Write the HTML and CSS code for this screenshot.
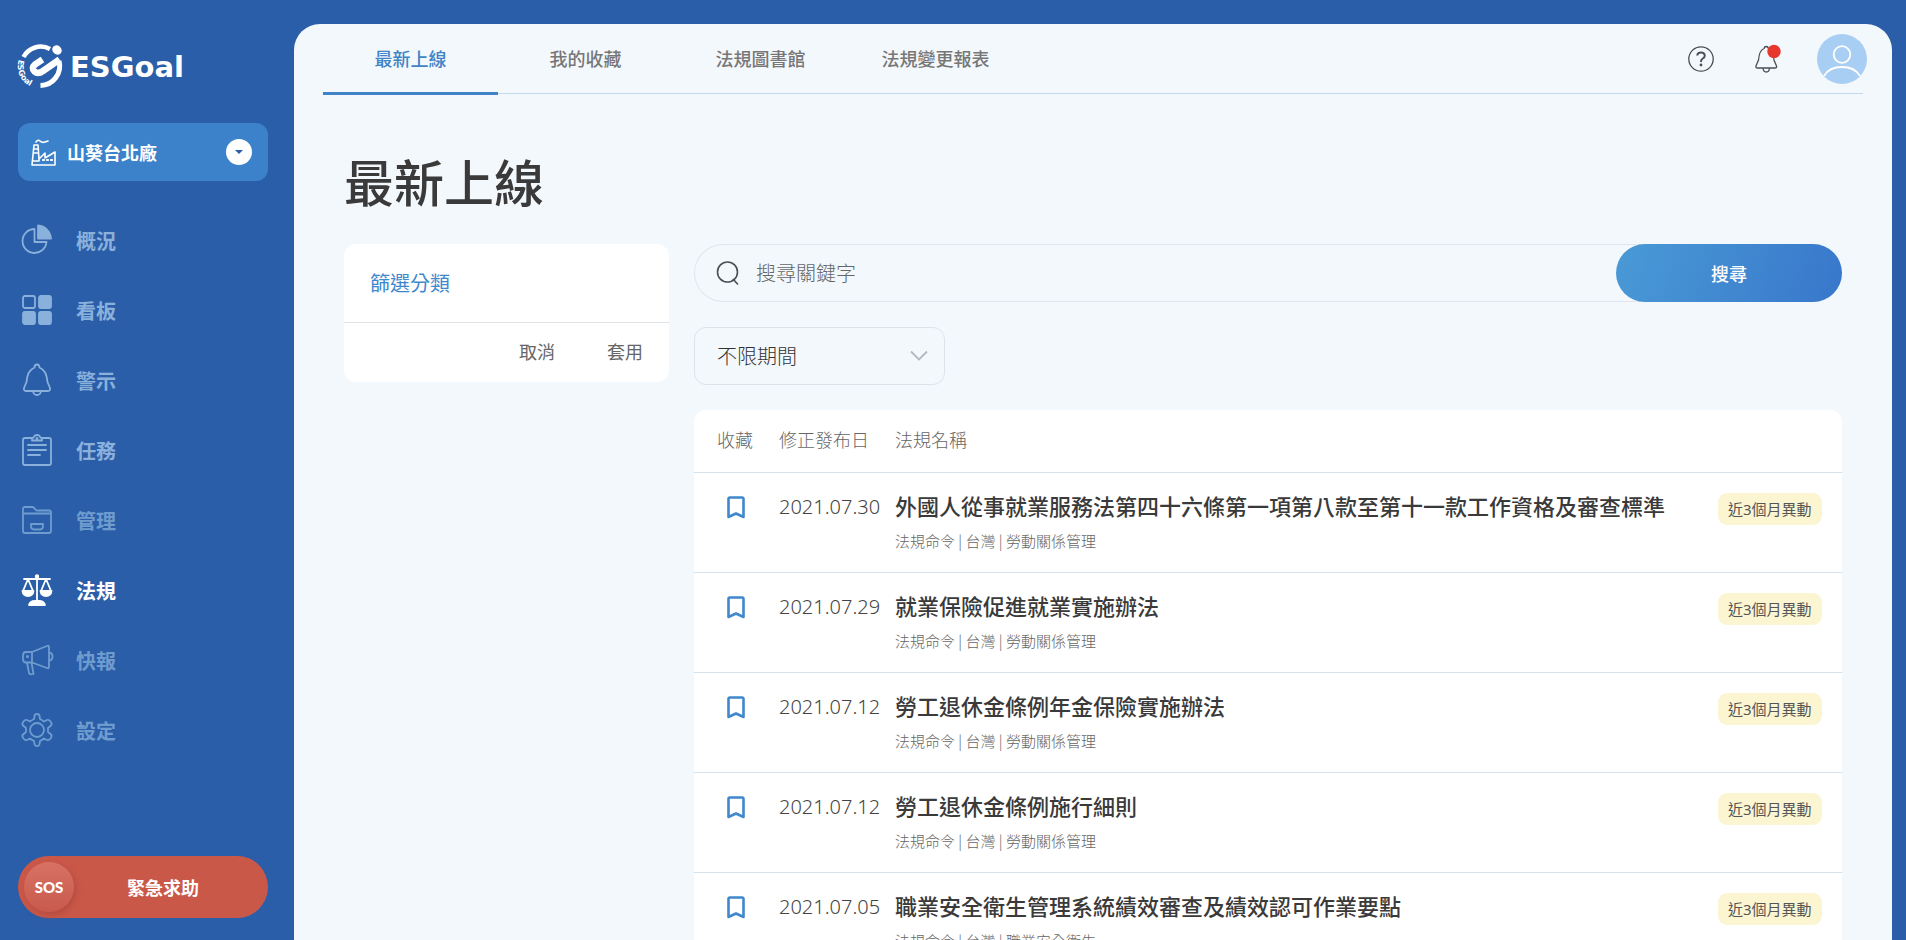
FILE: index.html
```html
<!DOCTYPE html>
<html lang="zh-Hant">
<head>
<meta charset="utf-8">
<meta name="viewport" content="width=device-width, initial-scale=1">
<title>ESGoal 最新上線</title>
<link rel="stylesheet" href="styles.css">
</head>
<body>
<div class="app">
  <aside class="sidebar">
    <a class="logo" href="#" aria-label="ESGoal">
      <svg class="logo-mark" viewBox="0 0 44 46" width="44" height="46" fill="none" stroke="#fff">
        <path d="M5.500 13A19.500 19.500 0 0 1 32 5" stroke-width="4.500"/>
        <ellipse cx="39" cy="6" rx="5" ry="4.400" fill="#fff" stroke="none" transform="rotate(40 39 6)"/>
        <path d="M22.500 41.500A19.500 19.500 0 0 0 41 17" stroke-width="5"/>
        <path d="M24.500 15.500L17 20.500Q13 24 16.500 27.500Q20 30.500 25 27L41.500 15.500" stroke-width="6.500" stroke-linejoin="round"/>
        <path id="ring" d="M1 15.500A22 22 0 0 0 22 44.500" stroke="none"/>
        <text class="ring-text"><textPath href="#ring">ESGoal</textPath></text>
      </svg>
      <span class="logo-name">ESGoal</span>
    </a>
    <button class="site" type="button">
      <svg width="25" height="27" viewBox="0 0 25 27" fill="none" stroke="#fff" stroke-width="1.600" stroke-linejoin="round" stroke-linecap="round">
        <path d="M1 26L3 6H7L8 20L14 14V19L24 13V26H1ZM3 10H7M2.500 14H7.500M2 22H8V20M5 3Q7 0 9 2T14 3T17 2"/>
        <path d="M12 21H13M16 21H17M20 21H21" stroke-width="2.200"/>
      </svg>
      <span class="site-name">山葵台北廠</span>
      <svg width="26" height="26" viewBox="0 0 26 26"><circle cx="13" cy="13" r="13" fill="#fff"/><path d="M9 11H17L13 15Z" fill="#2a5ea8"/></svg>
    </button>
    <nav class="menu">
      <a class="menu-item" href="#">
        <svg viewBox="0 0 32 32"><path d="M13.500 5A12 12 0 1 0 25.500 18H13.500Z"/><path class="solid" d="M17 1.500A14 14 0 0 1 30 14.500H17Z"/></svg>概況</a>
      <a class="menu-item" href="#">
        <svg viewBox="0 0 32 32"><rect x="2" y="2" width="12" height="12" rx="2"/><rect class="solid" x="18" y="2" width="12" height="12" rx="2"/><rect class="solid" x="2" y="18" width="12" height="12" rx="2"/><rect class="solid" x="18" y="18" width="12" height="12" rx="2"/></svg>看板</a>
      <a class="menu-item" href="#">
        <svg viewBox="0 0 32 32"><path d="M16 0.500Q13.500 0.500 13.500 3.500C8 6 6.500 10 5.500 18L3 24Q2.500 27 5 27H27Q29.500 27 29 24L26.500 18C25.500 10 24 6 18.500 3.500Q18.500 0.500 16 0.500ZM12 27Q12.500 31 16 31T20 27"/></svg>警示</a>
      <a class="menu-item" href="#">
        <svg viewBox="0 0 32 32"><path d="M11 4H4Q2 4 2 6V29Q2 31 4 31H28Q30 31 30 29V6Q30 4 28 4H21V6.500H11V4Q13 4 13 2.500Q14 1 16 1T19 2.500Q19 4 21 4M7 11H25M7 16H25M7 21H19"/><circle class="solid" cx="16" cy="4.500" r="0.600"/></svg>任務</a>
      <a class="menu-item dim" href="#">
        <svg viewBox="0 0 32 32"><path d="M2 27V5Q2 3 4 3H11Q13 3 14 5T17 6.500H28Q30 6.500 30 8.500V26.500Q30 29 28 29H4Q2 29 2 27ZM2 9.500H30M10 20H22V22Q22 25.500 19 25.500H13Q10 25.500 10 22Z"/></svg>管理</a>
      <a class="menu-item active" href="#">
        <svg viewBox="0 0 32 32"><path d="M3 5H29M16 2V27M2 17L7 5L12 17M20 17L25 5L30 17"/><circle class="solid" cx="16" cy="2.500" r="1.300"/><path class="solid" d="M1.500 17H12.500Q12 22 7 22T1.500 17ZM19.500 17H30.500Q30 22 25 22T19.500 17ZM8 31Q9 27 14 27H18Q23 27 24 31Z"/></svg>法規</a>
      <a class="menu-item dim" href="#">
        <svg viewBox="0 0 32 32"><path d="M11 8L26 2Q28 1 28 3V22Q28 25 26 24L11 18.500H5Q2 18.500 2 15V11.500Q2 8 5 8ZM11 8V18.500M28 8.500Q31.500 9 31.500 12.500T28 17M6 18.500L8 29Q9 31 12.500 30L10.500 18.500"/><circle class="solid" cx="6.500" cy="12.500" r="0.700"/></svg>快報</a>
      <a class="menu-item dim" href="#">
        <svg viewBox="0 0 32 32"><circle cx="16" cy="16" r="7"/><path d="M13.500 2Q13.700 0 16 0T18.500 2L19 5Q21 6 23 7.500L26 6Q28 5.500 29.500 7.500Q31.500 10 30 11.500L27 14V18L30 20.500Q31.500 22 29.500 24.500Q28 26.500 26 26L23 24.500Q21 26 19 27L18.500 30Q18.300 32 16 32T13.500 30L13 27Q11 26 9 24.500L6 26Q4 26.500 2.500 24.500Q0.500 22 2 20.500L5 18V14L2 11.500Q0.500 10 2.500 7.500Q4 5.500 6 6L9 7.500Q11 6 13 5Z"/></svg>設定</a>
    </nav>
    <button class="sos" type="button"><span class="sos-knob">SOS</span><span class="sos-label">緊急求助</span></button>
  </aside>

  <div class="panel">
    <header class="topbar">
      <nav class="tabs">
        <a class="tab current" href="#">最新上線</a>
        <a class="tab" href="#">我的收藏</a>
        <a class="tab" href="#">法規圖書館</a>
        <a class="tab" href="#">法規變更報表</a>
      </nav>
      <div class="tools">
        <button class="tool" type="button" aria-label="說明">
          <svg width="26" height="26" viewBox="0 0 26 26" fill="none" stroke="#4c4f54"><circle cx="13" cy="13" r="12.200" stroke-width="1.300"/><path d="M9.200 9.500Q9.500 6.500 13 6.500T16.800 9.500Q16.800 11.300 14.800 12.500T13 16" stroke-width="2"/><circle cx="13" cy="19" r="1.400" fill="#4c4f54" stroke="none"/></svg>
        </button>
        <button class="tool" type="button" aria-label="通知">
          <svg class="bell" width="26" height="28" viewBox="0 0 26 28" fill="none" stroke="#4c4f54" stroke-width="1.300"><path d="M12 1.500Q10.500 1.500 10 3.500C6 5 5 9 4.500 15L2 21Q1.500 23 3.500 23H21Q23 23 22.500 21L20 15C19.500 9 18.500 5 14.500 3.500Q14 1.500 12 1.500ZM9 23Q9.300 27 12.300 27T15.500 23"/><circle cx="20" cy="6.500" r="6.700" fill="#e8382d" stroke="none"/></svg>
        </button>
        <button class="tool avatar" type="button" aria-label="帳號">
          <svg width="50" height="50" viewBox="0 0 50 50" fill="none" stroke="#fff" stroke-width="1.800"><circle cx="25" cy="25" r="25" fill="#a9cef3" stroke="none"/><circle cx="25" cy="20.500" r="8.300"/><path d="M7 42Q12 33 25 33T43 42"/></svg>
        </button>
      </div>
    </header>

    <main class="content">
      <h1 class="title">最新上線</h1>
      <div class="columns">
        <section class="filter">
          <h2 class="filter-title">篩選分類</h2>
          <div class="filter-actions">
            <button class="text-button" type="button">取消</button>
            <button class="text-button" type="button">套用</button>
          </div>
        </section>
        <div class="results">
          <form class="search" role="search">
            <svg width="24" height="26" viewBox="0 0 24 26" fill="none" stroke="#4c4f54" stroke-width="1.600"><circle cx="11.500" cy="12" r="10"/><path d="M17 19L22 24.500"/></svg>
            <input class="search-input" type="search" placeholder="搜尋關鍵字" aria-label="搜尋關鍵字">
            <button class="search-button" type="submit">搜尋</button>
          </form>
          <div class="period">
            <select class="period-select" aria-label="期間"><option>不限期間</option></select>
            <svg class="chevron" width="18" height="12" viewBox="0 0 18 12" fill="none" stroke="#b4b9bf" stroke-width="1.800"><path d="M1 1.500L9 9.500L17 1.500"/></svg>
          </div>
          <table class="laws">
            <thead>
              <tr><th class="col-mark">收藏</th><th class="col-date">修正發布日</th><th class="col-name">法規名稱</th><th class="col-tag"></th></tr>
            </thead>
            <tbody>
              <tr>
                <td class="col-mark"><button class="mark" type="button" aria-label="收藏"><svg width="18" height="23" viewBox="0 0 18 23"><path d="M1.500 21V3Q1.500 1.500 3 1.500H15Q16.500 1.500 16.500 3V21L9 17.500Z"/></svg></button></td>
                <td class="col-date">2021.07.30</td>
                <td class="col-name"><a class="law" href="#">外國人從事就業服務法第四十六條第一項第八款至第十一款工作資格及審查標準</a><p class="meta">法規命令 | 台灣 | 勞動關係管理</p></td>
                <td class="col-tag"><span class="tag">近3個月異動</span></td>
              </tr>
              <tr>
                <td class="col-mark"><button class="mark" type="button" aria-label="收藏"><svg width="18" height="23" viewBox="0 0 18 23"><path d="M1.500 21V3Q1.500 1.500 3 1.500H15Q16.500 1.500 16.500 3V21L9 17.500Z"/></svg></button></td>
                <td class="col-date">2021.07.29</td>
                <td class="col-name"><a class="law" href="#">就業保險促進就業實施辦法</a><p class="meta">法規命令 | 台灣 | 勞動關係管理</p></td>
                <td class="col-tag"><span class="tag">近3個月異動</span></td>
              </tr>
              <tr>
                <td class="col-mark"><button class="mark" type="button" aria-label="收藏"><svg width="18" height="23" viewBox="0 0 18 23"><path d="M1.500 21V3Q1.500 1.500 3 1.500H15Q16.500 1.500 16.500 3V21L9 17.500Z"/></svg></button></td>
                <td class="col-date">2021.07.12</td>
                <td class="col-name"><a class="law" href="#">勞工退休金條例年金保險實施辦法</a><p class="meta">法規命令 | 台灣 | 勞動關係管理</p></td>
                <td class="col-tag"><span class="tag">近3個月異動</span></td>
              </tr>
              <tr>
                <td class="col-mark"><button class="mark" type="button" aria-label="收藏"><svg width="18" height="23" viewBox="0 0 18 23"><path d="M1.500 21V3Q1.500 1.500 3 1.500H15Q16.500 1.500 16.500 3V21L9 17.500Z"/></svg></button></td>
                <td class="col-date">2021.07.12</td>
                <td class="col-name"><a class="law" href="#">勞工退休金條例施行細則</a><p class="meta">法規命令 | 台灣 | 勞動關係管理</p></td>
                <td class="col-tag"><span class="tag">近3個月異動</span></td>
              </tr>
              <tr>
                <td class="col-mark"><button class="mark" type="button" aria-label="收藏"><svg width="18" height="23" viewBox="0 0 18 23"><path d="M1.500 21V3Q1.500 1.500 3 1.500H15Q16.500 1.500 16.500 3V21L9 17.500Z"/></svg></button></td>
                <td class="col-date">2021.07.05</td>
                <td class="col-name"><a class="law" href="#">職業安全衛生管理系統績效審查及績效認可作業要點</a><p class="meta">法規命令 | 台灣 | 職業安全衛生</p></td>
                <td class="col-tag"><span class="tag">近3個月異動</span></td>
              </tr>
            </tbody>
          </table>
        </div>
      </div>
    </main>
  </div>
</div>
</body>
</html>
```

FILE: styles.css
```css
* { box-sizing: border-box; }

body {
  margin: 0;
  background: #2a5ea8;
  color: #3a3a3a;
  font-family: "Noto Sans", "Noto Sans CJK TC", sans-serif;
}

button, input, select { font: inherit; color: inherit; }
button { border: 0; padding: 0; background: none; cursor: pointer; }
a { color: inherit; text-decoration: none; }
svg { display: block; flex: none; }

.app { display: flex; height: 100vh; overflow: hidden; }

/* Sidebar */
.sidebar {
  flex: none;
  width: 294px;
  display: flex;
  flex-direction: column;
  padding: 44px 26px 22px 18px;
  color: #fff;
}

.logo { display: flex; align-items: center; gap: 8px; }
.ring-text { fill: #fff; stroke: none; font: bold 8px "DejaVu Sans", sans-serif; }
.logo-mark, .bell { overflow: visible; }
.logo-name { font: bold 29px/46px "DejaVu Sans", sans-serif; }

.site {
  display: flex;
  align-items: center;
  gap: 11px;
  height: 58px;
  margin-top: 33px;
  padding: 0 16px 0 13px;
  border-radius: 12px;
  background: #3b82cb;
  font-size: 18px;
  font-weight: 700;
}
.site-name { flex: 1; text-align: left; }

.menu { margin-top: 24px; }
.menu-item {
  display: flex;
  align-items: center;
  gap: 23px;
  height: 70px;
  padding-left: 3px;
  color: #8ab0dc;
  font-size: 20px;
  font-weight: 700;
}
.menu-item.dim { color: #6f9ccf; }
.menu-item.active { color: #fff; }
.menu-item svg {
  width: 32px;
  height: 32px;
  overflow: visible;
  fill: none;
  stroke: currentColor;
  stroke-width: 1.8;
  stroke-linejoin: round;
  stroke-linecap: round;
}
.menu-item .solid { fill: currentColor; }

.sos {
  display: flex;
  align-items: center;
  height: 62px;
  margin-top: auto;
  padding: 0 6px;
  border-radius: 31px;
  background: #ca5849;
  font-size: 18px;
  font-weight: 700;
}
.sos-knob {
  width: 50px;
  height: 50px;
  border-radius: 50%;
  background: linear-gradient(#d87265, #c85a4c);
  box-shadow: 2px 3px 6px #b14c3f;
  font: 900 15px/50px Lato, sans-serif;
}
.sos-label { flex: 1; padding-right: 10px; }

/* Main panel */
.panel {
  flex: 1;
  min-width: 0;
  margin: 24px 14px 0 0;
  border-radius: 26px 26px 0 0;
  background: #f3f8fd;
  overflow: hidden;
}

.topbar {
  display: flex;
  justify-content: space-between;
  height: 70px;
  margin: 0 29px;
  border-bottom: 1px solid #c3d8ee;
}
.tabs { display: flex; }
.tab {
  width: 175px;
  height: 71px;
  border-bottom: 3px solid transparent;
  color: #777;
  font-size: 18px;
  font-weight: 500;
  line-height: 70px;
  text-align: center;
}
.tab.current { border-color: #3f84c6; color: #3f84c6; }
.tools { display: flex; align-items: center; gap: 40px; margin-right: -4px; }
.avatar { margin-left: -3px; }

.content { padding: 56px 50px 0; }
.title { margin: 0; font-size: 50px; font-weight: 500; line-height: 66px; }
.columns { display: flex; align-items: flex-start; gap: 25px; margin-top: 28px; }

.filter {
  flex: none;
  width: 325px;
  border-radius: 12px;
  background: #fff;
}
.filter-title {
  margin: 0;
  padding: 2px 26px 0;
  border-bottom: 1px solid #dfe4e8;
  color: #3f88cc;
  font-size: 20px;
  font-weight: 400;
  line-height: 76px;
}
.filter-actions {
  display: flex;
  justify-content: flex-end;
  gap: 52px;
  padding: 0 26px;
}
.text-button { color: #666; font-size: 18px; line-height: 59px; }

.results { flex: 1; min-width: 0; }
.search {
  display: flex;
  align-items: center;
  height: 58px;
  padding-left: 22px;
  border-radius: 29px;
  box-shadow: inset 0 0 0 1px #dfe5ea;
}
.search-input {
  flex: 1;
  min-width: 0;
  padding: 0 16px;
  border: 0;
  outline: 0;
  background: none;
  font-size: 20px;
  font-weight: 300;
}
.search-input::placeholder { color: #666; }
.search-button {
  width: 226px;
  height: 58px;
  border-radius: 29px;
  background: linear-gradient(110deg, #4a9ad6, #3877cb);
  color: #fff;
  font-size: 18px;
  font-weight: 500;
}

.period { position: relative; width: 251px; margin-top: 25px; }
.period-select {
  display: block;
  width: 100%;
  height: 58px;
  padding: 0 22px;
  border: 1px solid #dde3e9;
  border-radius: 12px;
  background: none;
  appearance: none;
  color: #333;
  font-size: 20px;
  font-weight: 300;
}
.chevron { position: absolute; top: 23px; right: 17px; pointer-events: none; }

.laws {
  width: 100%;
  margin-top: 25px;
  border-radius: 12px 12px 0 0;
  border-spacing: 0;
  table-layout: fixed;
  background: #fff;
}
.laws th {
  height: 62px;
  padding: 0 0 4px;
  color: #666;
  font-size: 18px;
  font-weight: 300;
  text-align: left;
}
.laws td {
  height: 100px;
  padding: 20px 0 0;
  border-top: 1px solid #d6e2ec;
  vertical-align: top;
}
.laws .col-mark { width: 85px; padding-left: 23px; }
.laws td.col-mark { padding-left: 33px; }
.laws .col-date { width: 116px; }
.laws .col-tag { width: 124px; }
.laws td.col-date { color: #444; font-size: 20px; font-weight: 300; line-height: 28px; }
.mark { display: block; padding-top: 3px; }
.mark svg { fill: none; stroke: #3f88cc; stroke-width: 2.6; stroke-linejoin: round; }
.law { display: block; font-size: 22px; font-weight: 500; line-height: 26px; white-space: nowrap; }
.meta {
  margin: 11px 0 0;
  color: #666;
  font-family: "Noto Sans CJK TC", sans-serif;
  font-size: 15px;
  font-weight: 300;
  line-height: 22px;
}
.tag {
  display: inline-block;
  padding: 0 10px;
  border-radius: 9px;
  background: #fcf5d2;
  color: #555;
  font-size: 15px;
  line-height: 32px;
}
```
